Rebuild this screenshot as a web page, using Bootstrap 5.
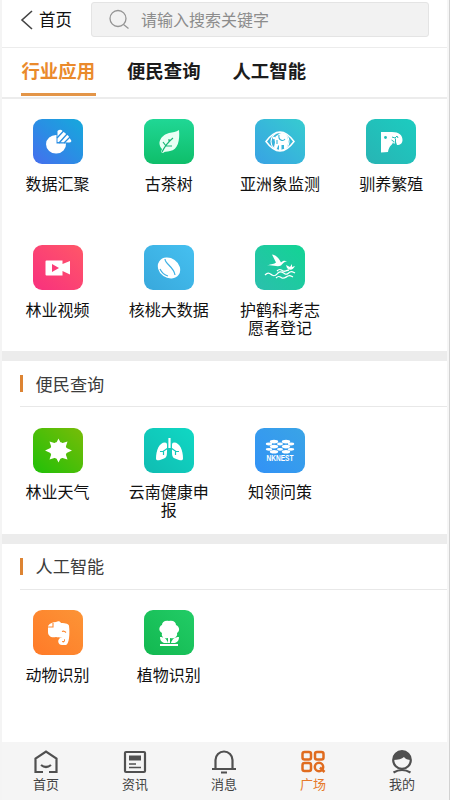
<!DOCTYPE html>
<html lang="zh-CN">
<head>
<meta charset="utf-8">
<meta name="viewport" content="width=device-width, initial-scale=1">
<title>广场</title>
<link href="https://cdn.jsdelivr.net/npm/bootstrap@5.3.0/dist/css/bootstrap.min.css" rel="stylesheet">
<style>
body{font-family:"Noto Sans CJK SC",sans-serif;background:#fff;color:#111;overflow:hidden}
.phone{width:450px;height:800px;border-left:2px solid #f4f4f4;border-right:1px solid #d2d2d2;padding-right:2px;background:#f6f6f6}
.screen{background:#fff}
.topbar{height:48px;border-bottom:1px solid #ececec;padding-left:18px}
.topbar .back{width:71px;height:39px;font-size:16.5px;line-height:38px}
.search{width:338px;height:35px;margin-top:2px;padding-bottom:2px;background:#f2f2f2;border:1px solid #e4e4e4;border-radius:3px;color:#8c8c8c;font-size:16px}
.tabs{height:51px;border-bottom:2px solid #ececec;padding-left:19px;gap:31px}
.tabs a{height:48px;font-size:18.4px;line-height:45px;font-weight:700;color:#1c1c1c;text-decoration:none;width:74.5px;text-align:center;white-space:nowrap}
.tabs a.on{color:#ea8a2c;border-bottom:3px solid #e39548}
.app{height:126px;font-size:16px;line-height:17.5px;padding-top:20px}
.app svg{width:50px;height:45px;display:block;margin:0 auto 11px}
.app span{display:block;width:84px;margin:0 auto}
.divider{height:10px;background:#ececec}
.sec{height:46px;border-bottom:1px solid #e8e8e8;margin-left:18px;font-size:17.2px;color:#3c3c3c}
.sec i{width:3px;height:17px;background:#dd8433;margin-right:12.5px}
.g1{height:252px}.g2{height:126.5px}.g3{height:152px}
.g2 .app{padding-top:21px}
.g2 .app svg{margin-bottom:10px}
.tabbar{height:58px;background:#f5f5f5;font-size:13px;line-height:16px;color:#444;padding-top:5px}
.tabbar svg{width:28px;height:28px;display:block;margin:0 auto 1px;fill:none;stroke:#505050;stroke-width:2.2}
.tabbar .col{padding-right:1px!important}
.tabbar .on{color:#e67a2a}.tabbar .on svg{stroke:#e06c1f;stroke-width:2.5}
</style>
</head>
<body>
<svg width="0" height="0" class="position-absolute"><defs>
<linearGradient id="a" x1="0" y1="1" x2="1" y2="0"><stop stop-color="#466eee"/><stop offset=".5" stop-color="#2a8ee4"/><stop offset="1" stop-color="#16a9dc"/></linearGradient>
<linearGradient id="b" x1="0" y1="0" x2="0" y2="1"><stop stop-color="#20d795"/><stop offset="1" stop-color="#0fbe6a"/></linearGradient>
<linearGradient id="c" x1="0" y1="1" x2="1" y2="0"><stop stop-color="#38a2e4"/><stop offset="1" stop-color="#36ccd0"/></linearGradient>
<linearGradient id="d" x1="0" y1="1" x2="1" y2="0"><stop stop-color="#28b4b4"/><stop offset="1" stop-color="#1cccc0"/></linearGradient>
<linearGradient id="e" x1="0" y1="1" x2="1" y2="0"><stop stop-color="#f8307e"/><stop offset="1" stop-color="#ff5768"/></linearGradient>
<linearGradient id="f" x1="0" y1="1" x2="1" y2="0"><stop stop-color="#38a8dc"/><stop offset="1" stop-color="#45c0f0"/></linearGradient>
<linearGradient id="g" x1="0" y1="1" x2="1" y2="0"><stop stop-color="#2bbfad"/><stop offset="1" stop-color="#12d494"/></linearGradient>
<linearGradient id="h" x1="0" y1="1" x2="1" y2="0"><stop stop-color="#20c008"/><stop offset="1" stop-color="#78bc08"/></linearGradient>
<linearGradient id="i" x1="0" y1="1" x2="1" y2="0"><stop stop-color="#10bcb2"/><stop offset="1" stop-color="#10d8c4"/></linearGradient>
<linearGradient id="j" x1="0" y1="1" x2="1" y2="0"><stop stop-color="#3292f6"/><stop offset="1" stop-color="#3aa4e6"/></linearGradient>
<linearGradient id="k" x1="0" y1="1" x2="1" y2="0"><stop stop-color="#ff7a28"/><stop offset="1" stop-color="#fc9436"/></linearGradient>
<linearGradient id="l" x1="0" y1="1" x2="1" y2="0"><stop stop-color="#12b850"/><stop offset="1" stop-color="#22cc66"/></linearGradient>
</defs></svg>
<div class="phone"><div class="screen">
<header class="topbar d-flex">
  <div class="back d-flex"><svg width="19" height="39" fill="none" stroke="#444" stroke-width="1.6"><path d="M12 11 2 20l10 9"/></svg>首页</div>
  <div class="search d-flex align-items-center"><svg width="49" height="33" fill="none" stroke="#949494" stroke-width="1.3"><circle cx="26" cy="16.500" r="8"/><path d="m31.500 22.500 5 4"/></svg>请输入搜索关键字</div>
</header>
<nav class="tabs d-flex"><a class="on" href="#">行业应用</a><a href="#">便民查询</a><a href="#">人工智能</a></nav>

<div class="row row-cols-4 g-0 text-center g1">
  <div class="col app"><svg viewBox="0 0 50 45"><rect width="50" height="45" rx="9" fill="url(#a)"/><path d="M23.500 16v8.500H33A10 9.300 0 1 1 23.500 16Z" fill="#fff"/><path d="M24.500 23V12q2-2 4-1l7 6 3 5q-1 2-3 1.500Z" fill="#fff"/><path d="m24 19 7-7.500M26 24l8.500-9.500M31 24l6-6" stroke="#278fe0" stroke-width="1.300"/></svg><span>数据汇聚</span></div>
  <div class="col app"><svg viewBox="0 0 50 45"><rect width="50" height="45" rx="9" fill="url(#b)"/><path d="M35 11c1 10-1 20-9 21-3 1-5 0-7 2l-2-1 1-3c-6-7 0-14 7-16 4-1 7-1 10-3Z" fill="#e9fff4"/><path d="M18 33c3-6 6-10 11-14M22 27l-3-4M22 27l6 0M25 23v-3" fill="none" stroke="#18b876" stroke-width="1.200"/></svg><span>古茶树</span></div>
  <div class="col app"><svg viewBox="0 0 50 45"><rect width="50" height="45" rx="9" fill="url(#c)"/><path d="M11 22.500q14-19 28 0-14 19-28 0Z" fill="none" stroke="#fff" stroke-width="1.500"/><circle cx="25" cy="22.500" r="9" fill="none" stroke="#fff" stroke-width="1.100"/><path d="M23 16c1-2 5-3 8 0 3 4 3 10 0 13l-2 1v-4h-2.500v5H24v-5c-2 1-1 5-4 4-2-2 0-4 0-7-1-3 0-6 3-7Z" fill="#fff"/><path d="M24 16c-1 5 4 7 6 4M22 21v4" stroke="#36b7d8" fill="none" stroke-width="1.100"/><circle cx="19" cy="19" r="1.200" fill="#fff"/></svg><span>亚洲象监测</span></div>
  <div class="col app"><svg viewBox="0 0 50 45"><rect width="50" height="45" rx="9" fill="url(#d)"/><path d="M15 13h11c7 0 10.500 3 10.500 8 0 3-2 5-5.500 5l-1-3-2 2-1-2c0 3-4 3-5 10l-7 .5Z" fill="#fff"/><circle cx="19.500" cy="18.500" r="1.400" fill="#22bdb6"/><path d="m26 18 3 1 2-2 1 2M29.500 19.500v4.500M25.500 21l3 2" fill="none" stroke="#22bdb6"/></svg><span>驯养繁殖</span></div>
  <div class="col app"><svg viewBox="0 0 50 45"><rect width="50" height="45" rx="9" fill="url(#e)"/><path d="M13.500 15.500h16v3.500L37 16v13.500L29.500 26v4.500h-16q-1 0-1-1v-13q0-1 1-1Z" fill="#fff"/><path d="m19 19 7 4-7 4Z" fill="#fb3d77"/></svg><span>林业视频</span></div>
  <div class="col app"><svg viewBox="0 0 50 45"><rect width="50" height="45" rx="9" fill="url(#f)"/><ellipse cx="25" cy="23" rx="11.800" ry="9.800" transform="rotate(35 25 23)" fill="#fff"/><path d="M21 14c0 5 9 8 10 16M16 24c2 4 4 6 8 7" fill="none" stroke="#3eb1e4" stroke-width="1.200"/></svg><span>核桃大数据</span></div>
  <div class="col app"><svg viewBox="0 0 50 45"><rect width="50" height="45" rx="9" fill="url(#g)"/><path d="M12 20.500c5-2 7-1 9-3l-4-8c5 1 7 4 9 8 2-2 4-2 6-1-3 0-4 2-6 4-4 2-8-1-14 0ZM31 20l4 2 2-3v3l3-1c-2 4-5 5-8 2Z" fill="#fff"/><path d="M10 30c3-3 4-2 7 0s4 0 6-2c3-3 5 0 7 1s3-1 5-2 3 0 5 1M21 33c3-3 4-1 6 0s4-1 6-2 3 0 5 1M22 26c3-3 4-1 6 0s4-1 6-1" fill="none" stroke="#fff" stroke-width="1.300"/></svg><span>护鹤科考志愿者登记</span></div>
</div>
<div class="divider"></div>
<div class="sec d-flex align-items-center"><i></i>便民查询</div>
<div class="row row-cols-4 g-0 text-center g2">
  <div class="col app"><svg viewBox="0 0 50 45"><rect width="50" height="45" rx="9" fill="url(#h)"/><circle cx="25.500" cy="22.500" r="8.400" fill="#fff"/><path d="m25.500 10.500 2.500 5 6.500-2-2 6 6.500 3-6.500 3 2 6-6.500-2-2.500 5-2.500-5-6.500 2 2-6-6.500-3 6.500-3-2-6 6.500 2Z" fill="#fff"/></svg><span>林业天气</span></div>
  <div class="col app"><svg viewBox="0 0 50 45"><rect width="50" height="45" rx="9" fill="url(#i)"/><path d="M21 14.500c-6 0-9 8-9 16 0 2 2 2 4 1.500l4-1.500c3-1 3-4 3-8v-6q0-2-2-2ZM30 14.500c6 0 9 8 9 16 0 2-2 2-4 1.500l-4-1.500c-3-1-3-4-3-8v-6q0-2 2-2Z" fill="#fff"/><path d="M25.500 10v10" stroke="#fff" stroke-width="2.200"/><path d="m24 20-5 3.500h-3M19.500 23v4M27 20l5 3.500h3M31.500 23v4" fill="none" stroke="#12c8ba" stroke-width="1.200"/></svg><span>云南健康申报</span></div>
  <div class="col app"><svg viewBox="0 0 50 45"><rect width="50" height="45" rx="9" fill="url(#j)"/><g fill="#fff"><ellipse cx="19" cy="13.600" rx="4.200" ry="1.900"/><ellipse cx="31" cy="13.600" rx="4.200" ry="1.900"/><ellipse cx="14" cy="16" rx="3.200" ry="1.400"/><ellipse cx="25" cy="16" rx="3" ry="1.400"/><ellipse cx="36" cy="16" rx="3.200" ry="1.400"/><ellipse cx="19" cy="18.600" rx="4.200" ry="1.800"/><ellipse cx="31" cy="18.600" rx="4.200" ry="1.800"/><ellipse cx="14" cy="21.300" rx="3.200" ry="1.400"/><ellipse cx="25" cy="21.300" rx="3" ry="1.400"/><ellipse cx="36" cy="21.300" rx="3.200" ry="1.400"/><ellipse cx="19" cy="23.800" rx="4.200" ry="1.800"/><ellipse cx="31" cy="23.800" rx="4.200" ry="1.800"/></g><text x="11.500" y="33.300" font-family="Liberation Sans" font-size="8.500" font-weight="700" fill="#fff" textLength="27" lengthAdjust="spacingAndGlyphs">NKNEST</text></svg><span>知领问策</span></div>
</div>
<div class="divider"></div>
<div class="sec d-flex align-items-center"><i></i>人工智能</div>
<div class="row row-cols-4 g-0 text-center g3">
  <div class="col app"><svg viewBox="0 0 50 45"><rect width="50" height="45" rx="9" fill="url(#k)"/><path d="M15 16c2-3 5-4 8-4 2-1 4-1 5 1 5 0 8 1 8 3 1 8 0 18-3 19h-4c-4 0-5-5-2-7h4v3h-2c0 2 3 2 3-1-1-3-6-2-9-3-5 1-8-1-8-5Z" fill="#fff"/><path d="M14.500 17H20v-4M29 21.500q2-1 4 1" fill="none" stroke="#fd8830" stroke-width="1.100"/></svg><span>动物识别</span></div>
  <div class="col app"><svg viewBox="0 0 50 45"><rect width="50" height="45" rx="9" fill="url(#l)"/><path d="M25 11c4-1 7 1 7 4 4 2 4 6 1 8 1 4-3 6-7 5v5h-2v-5c-4 1-7-1-6-5-4-2-3-7 0-8 0-3 3-5 7-4ZM16 27c4 0 7 2 8 6h-4c-3-1-4-3-4-6ZM35 27c-4 0-7 2-8 6h4c3-1 4-3 4-6ZM16 34h18v2H16Z" fill="#fff"/></svg><span>植物识别</span></div>
</div>
</div>
<nav class="tabbar row row-cols-5 g-0 text-center">
  <div class="col"><svg viewBox="0 0 28 28"><path d="M11 25H3.500V11.500L14 4.500l10.500 7V25H17M9 18q5 4 10 0"/></svg>首页</div>
  <div class="col"><svg viewBox="0 0 28 28"><rect x="4" y="5" width="20" height="20" rx="1"/><path d="M8 11h12" stroke-width="5"/><path d="M8 17h7M8 20.500h12" stroke-width="1.600"/></svg>资讯</div>
  <div class="col"><svg viewBox="0 0 28 28"><path d="M2 22h24M5.500 22v-9a8.500 8.500 0 0 1 17 0v9M11 25.500h6"/></svg>消息</div>
  <div class="col on"><svg viewBox="0 0 28 28"><rect x="3.500" y="5" width="8.500" height="7.500" rx="2"/><rect x="16" y="5" width="8.500" height="7.500" rx="2"/><rect x="3.500" y="16" width="8.500" height="8" rx="2"/><circle cx="20" cy="20" r="4.200"/><path d="m21 20.500 4.500 4.500"/></svg>广场</div>
  <div class="col"><svg viewBox="0 0 28 28"><circle cx="14" cy="13" r="8.800"/><path d="M5 13C5 7 9 4 14 4s9 4 9 9c-3 0-6-1-7-3-2 2-6 3-11 3Z" fill="#505050" stroke="none"/><path d="M5.500 25.500q8.500-5 17 0"/></svg>我的</div>
</nav>
</div>
<script src="https://cdn.jsdelivr.net/npm/bootstrap@5.3.0/dist/js/bootstrap.bundle.min.js"></script>
</body>
</html>
